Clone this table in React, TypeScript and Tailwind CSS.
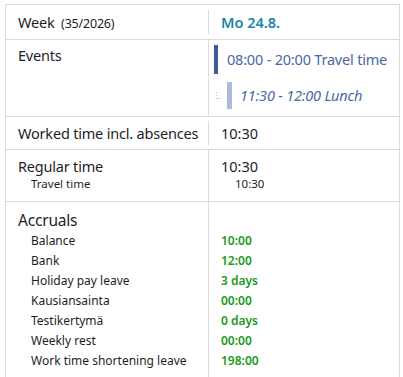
import React from 'react';

const accruals: [string, string][] = [
  ['Balance', '10:00'],
  ['Bank', '12:00'],
  ['Holiday pay leave', '3 days'],
  ['Kausiansainta', '00:00'],
  ['Testikertymä', '0 days'],
  ['Weekly rest', '00:00'],
  ['Work time shortening leave', '198:00'],
];

const Row: React.FC<{ left: React.ReactNode; right: React.ReactNode; className?: string }> = ({ left, right, className }) => (
  <div className={`flex border-b border-[#dadada] ${className ?? ''}`}>
    <div className="w-[203px] shrink-0 border-r border-[#dadada] pl-[12px]">{left}</div>
    <div className="flex-1 pl-[12px]">{right}</div>
  </div>
);

export default function App() {
  return (
    <div className="h-[377px] w-[403px] overflow-hidden bg-white text-[#1e1e1e]" style={{ fontFamily: '"Noto Sans", sans-serif' }}>
      <div className="ml-[5px] mt-[4px] w-[395px] border-l border-t border-r border-[#dadada]">
        {/* header */}
        <Row
          className="h-[35px] items-center"
          left={<span className="text-[14.5px] tracking-[-0.2px]">Week <span className="ml-[3px] text-[12.5px]">(35/2026)</span></span>}
          right={<span className="text-[14.5px] font-semibold text-[#1a86a8]">Mo 24.8.</span>}
        />

        {/* events */}
        <Row
          className="h-[77px]"
          left={<div className="pt-[5px] text-[14.5px] tracking-[-0.2px]">Events</div>}
          right={
            <div className="-ml-[7px] pt-[5px]">
              <div className="flex items-center">
                <div className="h-[29px] w-[4px] bg-[#3d5c9a]" />
                <span className="ml-[9px] text-[14.5px] tracking-[-0.2px] text-[#4a67a6]">08:00 - 20:00 Travel time</span>
              </div>
              <div className="mt-[8px] flex items-center">
                <svg width="6" height="8" viewBox="0 0 6 8" className="ml-[2px]">
                  <rect x="0" y="0" width="1" height="1" fill="#c8c8c8" />
                  <rect x="0" y="3" width="1" height="1" fill="#c8c8c8" />
                  <rect x="0" y="6" width="1" height="1" fill="#b0b0b0" />
                  <rect x="2" y="6" width="1" height="1" fill="#c8c8c8" />
                  <rect x="4" y="6" width="1" height="1" fill="#c8c8c8" />
                </svg>
                <div className="ml-[5px] h-[27px] w-[5px] bg-[#aebbd6]" />
                <span className="ml-[8px] text-[14.5px] tracking-[-0.2px] italic text-[#4a67a6]">11:30 - 12:00 Lunch</span>
              </div>
            </div>
          }
        />

        {/* worked */}
        <Row
          className="h-[33px] items-center"
          left={<span className="text-[14.5px] tracking-[-0.2px]">Worked time incl. absences</span>}
          right={<span className="text-[14.5px]">10:30</span>}
        />

        {/* regular */}
        <Row
          className="h-[52px]"
          left={
            <div className="pt-[6px]">
              <div className="text-[14.5px] leading-[20px] tracking-[-0.2px]">Regular time</div>
              <div className="pl-[13px] text-[11.5px] leading-[16px]">Travel time</div>
            </div>
          }
          right={
            <div className="pt-[6px]">
              <div className="text-[14.5px] leading-[20px]">10:30</div>
              <div className="pl-[14px] text-[11.5px] leading-[16px]">10:30</div>
            </div>
          }
        />

        {/* accruals */}
        <div className="flex h-[180px]">
          <div className="w-[203px] shrink-0 border-r border-[#dadada] pl-[12px] pt-[7px]">
            <div className="text-[15.5px] leading-[22px] tracking-[-0.2px]">Accruals</div>
            <div className="pl-[13px]">
              {accruals.map(([name]) => (
                <div key={name} className="h-[20px] text-[12px] leading-[20px]">{name}</div>
              ))}
            </div>
          </div>
          <div className="flex-1 pl-[12px] pt-[29px]">
            {accruals.map(([name, value]) => (
              <div key={name} className="h-[20px] text-[12px] font-semibold leading-[20px] text-[#1a9a1a]">{value}</div>
            ))}
          </div>
        </div>
      </div>
    </div>
  );
}
